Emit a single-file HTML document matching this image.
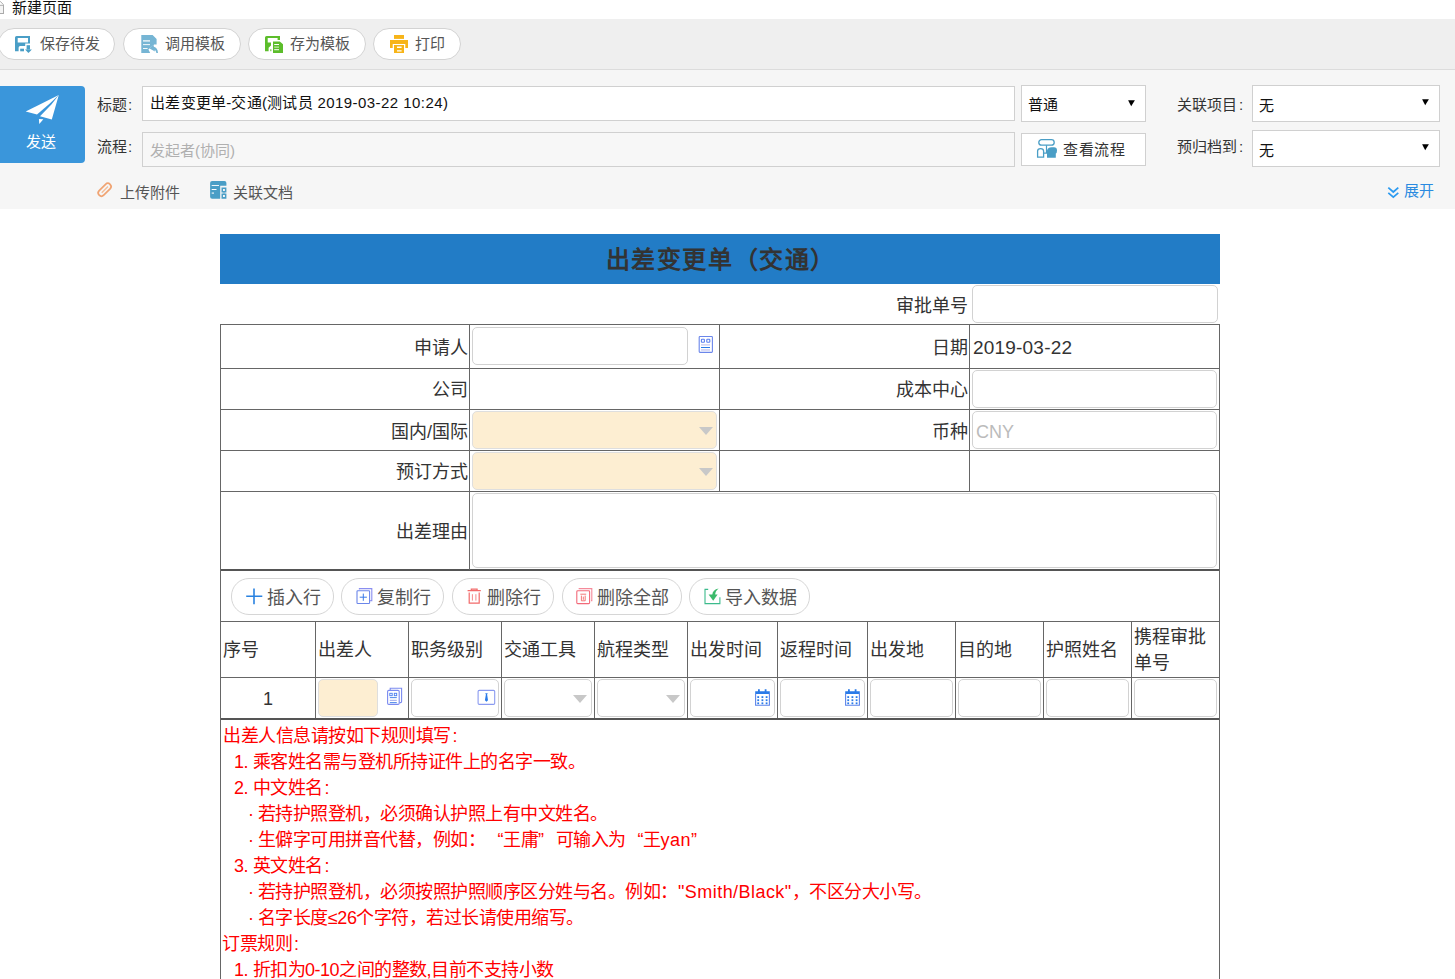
<!DOCTYPE html>
<html lang="zh-CN">
<head>
<meta charset="utf-8">
<style>
*{box-sizing:border-box;margin:0;padding:0}
html,body{width:1455px;height:979px;overflow:hidden;background:#fff;font-family:"Liberation Sans",sans-serif;color:#333}
.a{position:absolute;white-space:nowrap}
#topbar{left:0;top:0;width:1455px;height:19px;background:#fff}
#toolbar{left:0;top:19px;width:1455px;height:51px;background:#efefef;border-bottom:1px solid #dcdcdc}
.tb{position:absolute;top:9px;height:32px;border:1px solid #d3d3d3;border-radius:16px;background:#fff;font-size:15px;color:#555;line-height:30px}
.tb svg{position:absolute}
.tb span{position:absolute;top:0}
#hdr{left:0;top:70px;width:1455px;height:139px;background:#f6f6f6}
.lbl{font-size:15px;color:#333;line-height:20px}
.inp{position:absolute;background:#fff;border:1px solid #d0d0d0}
.sel{position:absolute;background:#fff;border:1px solid #d0d0d0;font-size:15px;color:#222}
.tri{position:absolute;width:0;height:0;border-left:4px solid transparent;border-right:4px solid transparent;border-top:9px solid #111}
#send{left:0;top:86px;width:85px;height:77px;background:#3a96db;border-radius:0 4px 4px 0}
.f18{font-size:18px;line-height:24px}
.tl{position:absolute;background:#666}
.ri{position:absolute;background:#fff;border:1px solid #d2d2d2;border-radius:5px}
.cr{position:absolute;background:#fdeed2;border:1px solid #dedede;border-radius:5px}
.gtri{position:absolute;width:0;height:0;border-left:7px solid transparent;border-right:7px solid transparent;border-top:8px solid #c8c8c8}
.sb{position:absolute;top:578px;height:37px;border:1px solid #d6d6d6;border-radius:18px;background:#fff;font-size:18px;color:#555}
.sb span{position:absolute;top:7px;line-height:24px;margin-left:-1px}
.sb svg{position:absolute}
.red{font-size:18px;color:#f00;line-height:24px;letter-spacing:-0.5px}
.lq{display:inline-block;width:17.5px;text-align:right}
.rq{display:inline-block;width:17.5px;text-align:left}
.lat{letter-spacing:0.45px}
</style>
</head>
<body>
<!-- top bar -->
<div class="a" id="topbar">
  <svg class="a" style="left:0;top:0" width="6" height="16" viewBox="0 0 6 16"><rect x="-4" y="5.3" width="7.5" height="8.2" fill="#f4f4f4" stroke="#aaa" stroke-width="1"/><path d="M0,1.2L3.5,4.7" stroke="#aaa" stroke-width="1" fill="none"/></svg>
  <div class="a" style="left:12px;top:-2px;font-size:15px;color:#111;line-height:20px">新建页面</div>
</div>
<!-- toolbar -->
<div class="a" id="toolbar">
  <div class="tb" style="left:-2px;width:117px">
    <svg style="left:16px;top:5px" width="20" height="20" viewBox="0 0 20 20"></svg>
    <span style="left:41px">保存待发</span>
  </div>
  <div class="tb" style="left:123px;width:118px">
    <span style="left:41px">调用模板</span>
  </div>
  <div class="tb" style="left:248px;width:118px">
    <span style="left:41px">存为模板</span>
  </div>
  <div class="tb" style="left:373px;width:88px">
    <span style="left:41px">打印</span>
  </div>
</div>
<!-- header form -->
<div class="a" id="hdr"></div>
<div class="a" id="send"></div>
<div class="a" style="left:26px;top:132px;font-size:15px;color:#fff;line-height:20px">发送</div>
<div class="a lbl" style="left:97px;top:95px">标题<span style="margin-left:1px">:</span></div>
<div class="a lbl" style="left:97px;top:137px">流程<span style="margin-left:1px">:</span></div>
<div class="inp" style="left:142px;top:86px;width:873px;height:35px"></div>
<div class="a" style="left:150px;top:93px;font-size:15px;color:#111;line-height:20px;letter-spacing:0.25px">出差变更单-交通(测试员 <span style="letter-spacing:0.45px">2019-03-22 10:24)</span></div>
<div class="inp" style="left:142px;top:132px;width:873px;height:35px;background:#f7f7f7"></div>
<div class="a" style="left:150px;top:141px;font-size:15px;color:#b0b0b0;line-height:20px">发起者(协同)</div>
<div class="sel" style="left:1021px;top:85px;width:125px;height:37px"></div>
<div class="a" style="left:1028px;top:95px;font-size:15px;color:#111;line-height:20px">普通</div>
<div class="sel" style="left:1021px;top:133px;width:125px;height:33px"></div>
<div class="a" style="left:1063px;top:140px;font-size:15px;color:#333;line-height:20px;letter-spacing:0.6px">查看流程</div>
<div class="a lbl" style="left:1177px;top:95px">关联项目<span style="margin-left:2px">:</span></div>
<div class="a lbl" style="left:1177px;top:137px">预归档到<span style="margin-left:2px">:</span></div>
<div class="sel" style="left:1252px;top:85px;width:188px;height:37px"></div>
<div class="a" style="left:1259px;top:96px;font-size:15px;color:#111;line-height:20px">无</div>
<div class="sel" style="left:1252px;top:130px;width:188px;height:37px"></div>
<div class="a" style="left:1259px;top:141px;font-size:15px;color:#111;line-height:20px">无</div>
<div class="a" style="left:120px;top:183px;font-size:15px;color:#555;line-height:20px">上传附件</div>
<div class="a" style="left:233px;top:183px;font-size:15px;color:#555;line-height:20px">关联文档</div>
<div class="a" style="left:1404px;top:181px;font-size:15px;color:#2a8ae0;line-height:20px">展开</div>

<!-- form -->
<div class="a" style="left:220px;top:234px;width:1000px;height:50px;background:#227cc6"></div>
<div class="a" style="left:220px;top:246px;width:1000px;text-align:center;font-size:24px;font-weight:bold;color:#333;line-height:28px;letter-spacing:1.6px;text-indent:1.6px">出差变更单（交通）</div>

<!-- table content -->
<div class="a" style="right:987px;top:336px;font-size:18px;line-height:24px;color:#333;text-align:right">申请人</div>
<div class="a" style="right:987px;top:378px;font-size:18px;line-height:24px;color:#333;text-align:right">公司</div>
<div class="a" style="right:987px;top:420px;font-size:18px;line-height:24px;color:#333;text-align:right">国内/国际</div>
<div class="a" style="right:987px;top:460px;font-size:18px;line-height:24px;color:#333;text-align:right">预订方式</div>
<div class="a" style="right:987px;top:520px;font-size:18px;line-height:24px;color:#333;text-align:right">出差理由</div>
<div class="a" style="right:487px;top:294px;font-size:18px;line-height:24px;color:#333;text-align:right">审批单号</div>
<div class="a" style="right:487px;top:336px;font-size:18px;line-height:24px;color:#333;text-align:right">日期</div>
<div class="a" style="right:487px;top:378px;font-size:18px;line-height:24px;color:#333;text-align:right">成本中心</div>
<div class="a" style="right:487px;top:420px;font-size:18px;line-height:24px;color:#333;text-align:right">币种</div>
<div class="a" style="left:973px;top:336px;font-size:19px;line-height:24px;color:#333;letter-spacing:0.2px">2019-03-22</div>
<div class="ri" style="left:972px;top:285px;width:246px;height:38px"></div>
<div class="ri" style="left:472px;top:327px;width:216px;height:38px"></div>
<div class="ri" style="left:972px;top:370px;width:245px;height:38px"></div>
<div class="cr" style="left:472px;top:411px;width:245px;height:38px"></div>
<div class="ri" style="left:972px;top:411px;width:245px;height:38px"></div>
<div class="cr" style="left:472px;top:452px;width:245px;height:38px"></div>
<div class="ri" style="left:472px;top:493px;width:745px;height:75px"></div>
<div class="a" style="left:976px;top:420px;font-size:18px;line-height:24px;color:#bbb">CNY</div>
<div class="gtri" style="left:699px;top:427px"></div>
<div class="gtri" style="left:699px;top:468px"></div>
<div class="sb" style="left:231px;width:103px"><span style="left:36px">插入行</span></div>
<div class="sb" style="left:341px;width:103px"><span style="left:36px">复制行</span></div>
<div class="sb" style="left:452px;width:102px"><span style="left:35px">删除行</span></div>
<div class="sb" style="left:562px;width:120px"><span style="left:35px">删除全部</span></div>
<div class="sb" style="left:689px;width:121px"><span style="left:36px">导入数据</span></div>
<div class="a" style="left:223px;top:638px;font-size:18px;line-height:24px;color:#333">序号</div>
<div class="a" style="left:318px;top:638px;font-size:18px;line-height:24px;color:#333">出差人</div>
<div class="a" style="left:411px;top:638px;font-size:18px;line-height:24px;color:#333">职务级别</div>
<div class="a" style="left:504px;top:638px;font-size:18px;line-height:24px;color:#333">交通工具</div>
<div class="a" style="left:597px;top:638px;font-size:18px;line-height:24px;color:#333">航程类型</div>
<div class="a" style="left:690px;top:638px;font-size:18px;line-height:24px;color:#333">出发时间</div>
<div class="a" style="left:780px;top:638px;font-size:18px;line-height:24px;color:#333">返程时间</div>
<div class="a" style="left:870px;top:638px;font-size:18px;line-height:24px;color:#333">出发地</div>
<div class="a" style="left:958px;top:638px;font-size:18px;line-height:24px;color:#333">目的地</div>
<div class="a" style="left:1046px;top:638px;font-size:18px;line-height:24px;color:#333">护照姓名</div>
<div class="a" style="left:1134px;top:625px;font-size:18px;line-height:24px;color:#333">携程审批</div>
<div class="a" style="left:1134px;top:651px;font-size:18px;line-height:24px;color:#333">单号</div>
<div class="a" style="left:263px;top:687px;font-size:18px;line-height:24px;color:#333">1</div>
<div class="cr" style="left:318px;top:679px;width:60px;height:38px"></div>
<div class="ri" style="left:411px;top:679px;width:88px;height:38px"></div>
<div class="ri" style="left:504px;top:679px;width:88px;height:38px"></div>
<div class="ri" style="left:597px;top:679px;width:88px;height:38px"></div>
<div class="ri" style="left:690px;top:679px;width:85px;height:38px"></div>
<div class="ri" style="left:780px;top:679px;width:85px;height:38px"></div>
<div class="ri" style="left:870px;top:679px;width:83px;height:38px"></div>
<div class="ri" style="left:958px;top:679px;width:83px;height:38px"></div>
<div class="ri" style="left:1046px;top:679px;width:83px;height:38px"></div>
<div class="ri" style="left:1134px;top:679px;width:83px;height:38px"></div>
<div class="gtri" style="left:573px;top:695px"></div>
<div class="gtri" style="left:666px;top:695px"></div>
<div class="a red" style="left:223px;top:724px">出差人信息请按如下规则填写<span style="margin-left:2px">:</span></div>
<div class="a red" style="left:234px;top:750px">1. 乘客姓名需与登机所持证件上的名字一致。</div>
<div class="a red" style="left:234px;top:776px">2. 中文姓名<span style="margin-left:2px">:</span></div>
<div class="a red" style="left:248px;top:802px">· 若持护照登机，必须确认护照上有中文姓名。</div>
<div class="a red" style="left:248px;top:828px">· 生僻字可用拼音代替，例如：<span class="lq">“</span>王庸<span class="rq">”</span>可输入为<span class="lq">“</span>王<span class="lat">yan</span><span class="rq">”</span></div>
<div class="a red" style="left:234px;top:854px">3. 英文姓名<span style="margin-left:2px">:</span></div>
<div class="a red" style="left:248px;top:880px">· 若持护照登机，必须按照护照顺序区分姓与名。例如：<span class="lat">"Smith/Black"</span>，不区分大小写。</div>
<div class="a red" style="left:248px;top:906px">· 名字长度≤26个字符，若过长请使用缩写。</div>
<div class="a red" style="left:222px;top:932px">订票规则<span style="margin-left:2px">:</span></div>
<div class="a red" style="left:234px;top:958px">1. 折扣为0-10之间的整数,目前不支持小数</div>
<!-- table lines -->
<div class="a" style="left:220px;top:324px;width:1000px;height:1px;background:#666"></div>
<div class="a" style="left:220px;top:368px;width:1000px;height:1px;background:#666"></div>
<div class="a" style="left:220px;top:409px;width:1000px;height:1px;background:#666"></div>
<div class="a" style="left:220px;top:450px;width:1000px;height:1px;background:#666"></div>
<div class="a" style="left:220px;top:491px;width:1000px;height:1px;background:#666"></div>
<div class="a" style="left:220px;top:569px;width:1000px;height:2px;background:#555"></div>
<div class="a" style="left:220px;top:621px;width:1000px;height:1px;background:#666"></div>
<div class="a" style="left:220px;top:677px;width:1000px;height:1px;background:#666"></div>
<div class="a" style="left:220px;top:718px;width:1000px;height:2px;background:#555"></div>
<div class="a" style="left:220px;top:324px;width:1px;height:655px;background:#666"></div>
<div class="a" style="left:1219px;top:324px;width:1px;height:655px;background:#666"></div>
<div class="a" style="left:469px;top:324px;width:1px;height:246px;background:#666"></div>
<div class="a" style="left:719px;top:324px;width:1px;height:167px;background:#666"></div>
<div class="a" style="left:969px;top:324px;width:1px;height:167px;background:#666"></div>
<div class="a" style="left:315px;top:621px;width:1px;height:97px;background:#666"></div>
<div class="a" style="left:408px;top:621px;width:1px;height:97px;background:#666"></div>
<div class="a" style="left:501px;top:621px;width:1px;height:97px;background:#666"></div>
<div class="a" style="left:594px;top:621px;width:1px;height:97px;background:#666"></div>
<div class="a" style="left:687px;top:621px;width:1px;height:97px;background:#666"></div>
<div class="a" style="left:777px;top:621px;width:1px;height:97px;background:#666"></div>
<div class="a" style="left:867px;top:621px;width:1px;height:97px;background:#666"></div>
<div class="a" style="left:955px;top:621px;width:1px;height:97px;background:#666"></div>
<div class="a" style="left:1043px;top:621px;width:1px;height:97px;background:#666"></div>
<div class="a" style="left:1131px;top:621px;width:1px;height:97px;background:#666"></div>
<!-- icons -->
<svg class="a" style="left:10px;top:30px" width="30" height="28" viewBox="0 0 30 28"><path fill="#4a9ec6" fill-rule="evenodd" d="M5,7.6Q5,6 6.6,6H20V13.4H15.2V16.1H10.2Q8.6,16.1 8.6,17.7V21.3H5Z M7.7,8H18V12.6H7.7Z"/><rect x="10.2" y="18.7" width="3.8" height="2.6" fill="#4a9ec6"/><rect x="16.6" y="15.2" width="3.4" height="4.4" fill="#4a9ec6"/><path d="M15,19.4H21.9L18.45,22.9Z" fill="#4a9ec6"/></svg>
<svg class="a" style="left:136px;top:30px" width="30" height="28" viewBox="0 0 30 28"><path fill="#76b5d4" d="M5.3,5.1H16.6L20.6,9.1V14.6L18.2,14.6L12.4,19.6L14.2,22.9H5.3Z"/><rect x="7" y="10.3" width="7" height="1.2" fill="#fff"/><rect x="7" y="14.2" width="7" height="0.9" fill="#fff"/><rect x="7" y="18" width="4.6" height="0.9" fill="#fff"/><path fill="#76b5d4" d="M13.6,18.4L17.4,14.8L17.9,16.8Q21.6,17.6 22,22.9L20.4,22.9Q19.8,20.4 18.6,19.8L19,21.6Z"/></svg>
<svg class="a" style="left:260px;top:30px" width="30" height="28" viewBox="0 0 30 28"><path fill="#5cbd2b" fill-rule="evenodd" d="M5,7.6Q5,6 6.6,6H20V10H17.6V8H7.7V12.6H11V15.6L8.6,17.8V21.3H5Z"/><rect x="10" y="19.2" width="1.5" height="2" fill="#8fd46a"/><path fill="#5cbd2b" d="M13,11.4H19.8L23,14.2V22.9H13Z"/><rect x="14.2" y="14" width="4.8" height="1" fill="#fff"/><rect x="14.2" y="16.6" width="4.8" height="1" fill="#d8f0c8"/><rect x="14.2" y="19.2" width="4.8" height="1" fill="#fff"/></svg>
<svg class="a" style="left:385px;top:30px" width="30" height="28" viewBox="0 0 30 28"><rect x="9" y="5" width="10" height="3.9" fill="#f7b418"/><path fill="#f7b418" d="M5,10H23V17.9H20.3V14H7.7V17.9H5Z"/><path fill="#f7b418" fill-rule="evenodd" d="M9,15H19V22.9H9Z M12,16.6H16.6V17.9H12Z M12,20.2H16.6V21.5H12Z"/></svg>
<svg class="a" style="left:0px;top:0px" width="85" height="170" viewBox="0 0 85 170"><path fill="#fff" d="M58.8,95L25.7,111.5L37,114.5L49.8,103.4Z"/><path fill="#fff" d="M58.8,95L51.8,119.6L40,116.2L51.4,104.6Z"/><path fill="#fff" d="M38.9,118.9L43.3,119.2L39.3,124Z"/></svg>
<svg class="a" style="left:1030px;top:135px" width="35" height="30" viewBox="0 0 35 30"><rect x="8.8" y="4.6" width="15.4" height="5.6" rx="2.8" fill="none" stroke="#4a9ec6" stroke-width="1.3"/><path d="M16.5,10.2V18.2H14" fill="none" stroke="#4a9ec6" stroke-width="1.2"/><path d="M7.6,22.2V16Q7.6,13.6 10.6,13.6Q13.6,13.6 13.6,16V22.2Z" fill="none" stroke="#4a9ec6" stroke-width="1.3"/><path fill="#4a9ec6" d="M17,15.5Q18,12.3 21.5,12.3H24Q27,12.3 27,15.5Q27,18 25.8,18.5V22.8H17Z"/></svg>
<svg class="a" style="left:92px;top:177px" width="26" height="26" viewBox="0 0 26 26"><g transform="translate(12.7,12.7) rotate(45)"><path d="M-3.2,4.6V-4.4A3.2,3.2 0 0 1 3.2,-4.4V4.6A3.2,3.2 0 0 1 -3.2,4.6Z" fill="none" stroke="#f0a473" stroke-width="1.7"/><path d="M0,-4.6V4.2" fill="none" stroke="#f5bc95" stroke-width="1.3"/></g></svg>
<svg class="a" style="left:200px;top:175px" width="35" height="30" viewBox="0 0 35 30"><path fill="#4a9ec6" d="M10.1,8Q10.1,6 12.1,6H24.4Q26.4,6 26.4,8V10.8H20.2V23.8H12.1Q10.1,23.8 10.1,21.8Z"/><rect x="11.7" y="10.1" width="7.3" height="0.9" fill="#fff"/><rect x="11.7" y="14" width="4.8" height="1" fill="#fff"/><rect x="11.7" y="17.5" width="2.3" height="1.2" fill="#e8f2f8"/><path fill="#4a9ec6" fill-rule="evenodd" d="M21.5,12.4H26.4V17.4H21.5Z M23,13.9H24.9V15.9H23Z"/><path fill="#4a9ec6" fill-rule="evenodd" d="M21.5,18.4H26.4V23.8H21.5Z M23,19.9H24.9V21.9H23Z"/><rect x="23.6" y="17" width="0.8" height="1.8" fill="#4a9ec6"/></svg>
<svg class="a" style="left:1380px;top:175px" width="25" height="30" viewBox="0 0 25 30"><path d="M8.3,12.6L13.3,17L18.3,12.6M8.3,17.8L13.3,22.2L18.3,17.8" fill="none" stroke="#2b9af0" stroke-width="1.7"/></svg>
<svg class="a" style="left:1128px;top:100px" width="8" height="7" viewBox="0 0 8 7"><path d="M0.1,0.2H6.9L3.2,6.3Z" fill="#000"/></svg>
<svg class="a" style="left:1422px;top:99px" width="8" height="7" viewBox="0 0 8 7"><path d="M0.1,0.2H6.9L3.2,6.3Z" fill="#000"/></svg>
<svg class="a" style="left:1422px;top:144px" width="8" height="7" viewBox="0 0 8 7"><path d="M0.1,0.2H6.9L3.2,6.3Z" fill="#000"/></svg>
<svg class="a" style="left:690px;top:330px" width="30" height="30" viewBox="0 0 30 30"><rect x="9.2" y="6.5" width="13.2" height="15.9" rx="0.8" fill="none" stroke="#6b86ea" stroke-width="1.1"/><rect x="11.4" y="9.3" width="3" height="3" rx="0.6" fill="none" stroke="#5b7ff0" stroke-width="1.1"/><rect x="16.8" y="9.3" width="3" height="3" rx="0.6" fill="none" stroke="#5b7ff0" stroke-width="1.1"/><rect x="11" y="14.3" width="9" height="1.2" fill="#c2c4f0"/><rect x="11" y="17" width="9" height="1" fill="#2a7ae8"/><rect x="11" y="19.3" width="9" height="1.3" fill="#c2c4f0"/></svg>
<svg class="a" style="left:380px;top:680px" width="30" height="30" viewBox="0 0 30 30"><path d="M10.2,10V8.3H21.6V21.6Q21.6,22.6 20.6,22.6H19.4" fill="none" stroke="#7b8af0" stroke-width="1.1"/><rect x="7.6" y="10.4" width="11.6" height="14" rx="1.2" fill="#fff" stroke="#7b8af0" stroke-width="1.1"/><rect x="9.8" y="13.3" width="2.4" height="2.4" fill="none" stroke="#4a7ef0" stroke-width="0.9"/><rect x="14.3" y="13.3" width="2.4" height="2.4" fill="none" stroke="#4a7ef0" stroke-width="0.9"/><rect x="9.8" y="17.2" width="7" height="0.9" fill="#3a7ae8"/><rect x="9.8" y="19.8" width="7" height="1.1" fill="#a8b0ec"/><rect x="9.8" y="22.2" width="7" height="0.9" fill="#3a7ae8"/></svg>
<svg class="a" style="left:470px;top:680px" width="30" height="30" viewBox="0 0 30 30"><rect x="8.1" y="10.4" width="16.6" height="14" rx="1.2" fill="none" stroke="#8a9af0" stroke-width="1.1"/><path fill="#2a7ae8" d="M15.2,13.2H17.8L17.1,14.6L18,20.2L16.5,21.8L14.9,20.2L15.9,14.6Z"/></svg>
<svg class="a" style="left:745px;top:680px" width="30" height="30" viewBox="0 0 30 30"><path fill="#2a7ae8" d="M10.2,11.2H13V9.3H14.8V11.2H19.7V9.3H21.5V11.2H24.8V14H10.2Z"/><path d="M10.6,14V25.3H24.4V14" fill="none" stroke="#5b84ea" stroke-width="1.1"/><rect x="12.3" y="16.2" width="1.8" height="1.8" fill="#2a7ae8"/><rect x="16.5" y="16.2" width="1.8" height="1.8" fill="#2a7ae8"/><rect x="20.700000000000003" y="16.2" width="1.8" height="1.8" fill="#2a7ae8"/><rect x="12.3" y="19.3" width="1.8" height="1.8" fill="#2a7ae8"/><rect x="16.5" y="19.3" width="1.8" height="1.8" fill="#2a7ae8"/><rect x="20.700000000000003" y="19.3" width="1.8" height="1.8" fill="#2a7ae8"/><rect x="12.3" y="22.4" width="1.8" height="1.8" fill="#2a7ae8"/><rect x="16.5" y="22.4" width="1.8" height="1.8" fill="#2a7ae8"/><rect x="20.700000000000003" y="22.4" width="1.8" height="1.8" fill="#2a7ae8"/></svg>
<svg class="a" style="left:835px;top:680px" width="30" height="30" viewBox="0 0 30 30"><path fill="#2a7ae8" d="M10.2,11.2H13V9.3H14.8V11.2H19.7V9.3H21.5V11.2H24.8V14H10.2Z"/><path d="M10.6,14V25.3H24.4V14" fill="none" stroke="#5b84ea" stroke-width="1.1"/><rect x="12.3" y="16.2" width="1.8" height="1.8" fill="#2a7ae8"/><rect x="16.5" y="16.2" width="1.8" height="1.8" fill="#2a7ae8"/><rect x="20.700000000000003" y="16.2" width="1.8" height="1.8" fill="#2a7ae8"/><rect x="12.3" y="19.3" width="1.8" height="1.8" fill="#2a7ae8"/><rect x="16.5" y="19.3" width="1.8" height="1.8" fill="#2a7ae8"/><rect x="20.700000000000003" y="19.3" width="1.8" height="1.8" fill="#2a7ae8"/><rect x="12.3" y="22.4" width="1.8" height="1.8" fill="#2a7ae8"/><rect x="16.5" y="22.4" width="1.8" height="1.8" fill="#2a7ae8"/><rect x="20.700000000000003" y="22.4" width="1.8" height="1.8" fill="#2a7ae8"/></svg>
<svg class="a" style="left:240px;top:580px" width="30" height="30" viewBox="0 0 30 30"><path d="M14,8.5V24.2M6.2,16.3H22.3" stroke="#2a82e0" stroke-width="1.6" fill="none"/></svg>
<svg class="a" style="left:350px;top:580px" width="30" height="30" viewBox="0 0 30 30"><path d="M9.4,9.5V8.6H21.8V20.6H20.2" fill="none" stroke="#8a8ef0" stroke-width="1.1"/><rect x="7" y="10.8" width="12.6" height="12.7" rx="0.8" fill="#fff" stroke="#6b86ea" stroke-width="1.1"/><path d="M13.3,13.6V20.8M9.7,17.2H16.9" stroke="#3a7ae8" stroke-width="1" fill="none"/></svg>
<svg class="a" style="left:460px;top:580px" width="30" height="30" viewBox="0 0 30 30"><path d="M7.6,10.6H20.8M11.3,10.4V9.1H17.1V10.4" fill="none" stroke="#f26a6a" stroke-width="1.2"/><path d="M9.2,12.5V23.2H19.2V12.5" fill="none" stroke="#f26a6a" stroke-width="1.2"/><path d="M12.4,14.2V20.6M15.9,14.2V20.6" stroke="#f58a8a" stroke-width="1" fill="none"/></svg>
<svg class="a" style="left:570px;top:580px" width="30" height="30" viewBox="0 0 30 30"><path d="M9.2,9.2V8.6H21.8V20.6H21" fill="none" stroke="#f58a9a" stroke-width="1.1"/><rect x="6.8" y="10.8" width="12.8" height="12.8" rx="0.9" fill="#fff" stroke="#f26a7a" stroke-width="1.1"/><path d="M10.3,14.2H16.2M11.4,15.6V20.8H15.2V15.6M13.3,16.6V19.8" fill="none" stroke="#f26a6a" stroke-width="0.9"/></svg>
<svg class="a" style="left:700px;top:580px" width="30" height="30" viewBox="0 0 30 30"><path d="M8.2,9.4H5V23.6H19.9V17.2" fill="none" stroke="#3cbb8c" stroke-width="1.1"/><path fill="#3cbb6c" d="M18.6,8.6Q12.6,9.6 12.2,15.2H15.2Q15,11.4 18.6,8.6Z"/><path fill="#3cbb6c" d="M8.6,14.6H17.6L13.2,20.8Z"/></svg>
</body>
</html>
